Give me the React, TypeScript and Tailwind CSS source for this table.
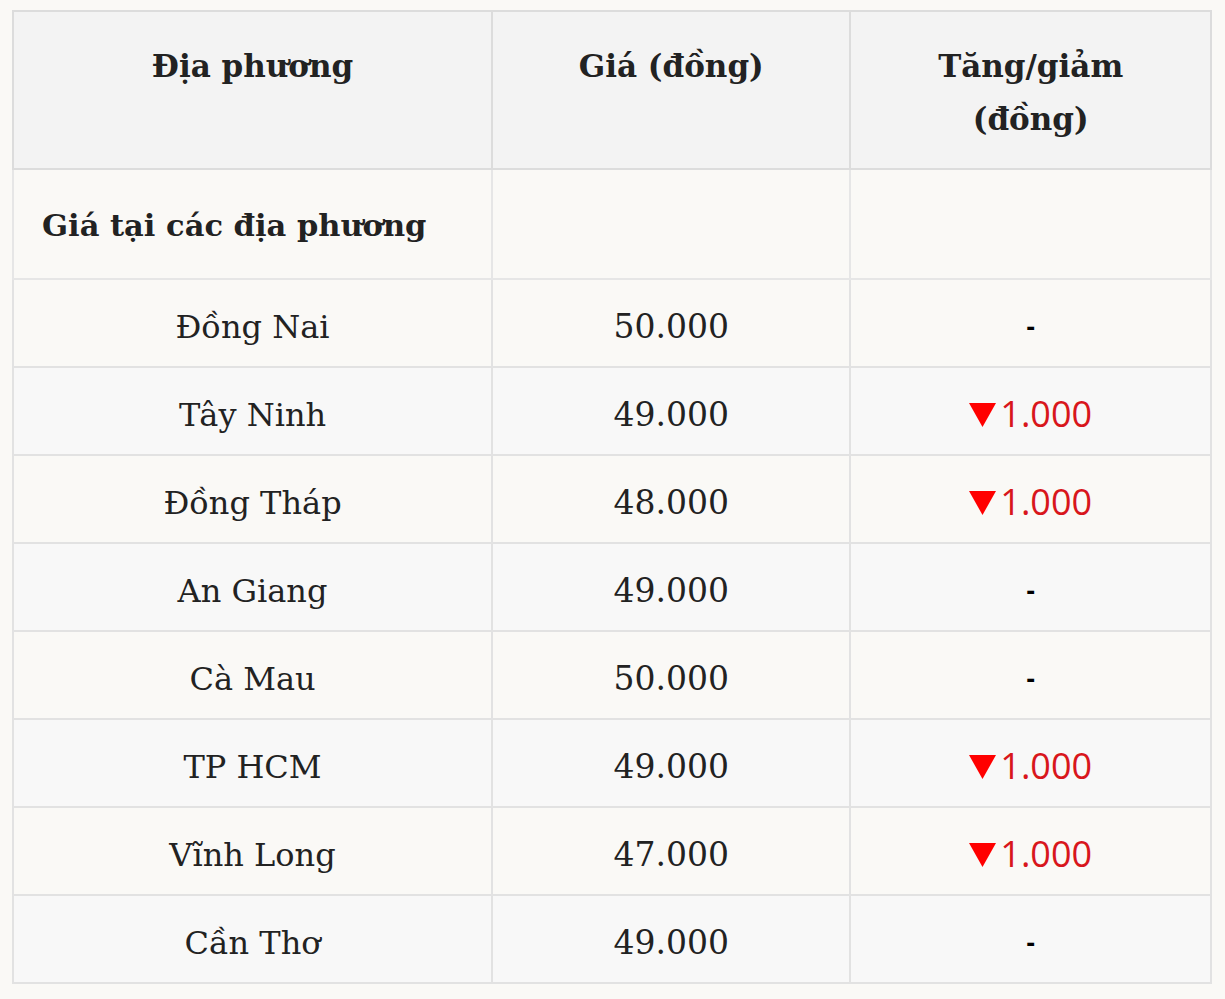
const rows: { name: string; price: string; change: string | null }[] = [
  { name: 'Đồng Nai', price: '50.000', change: null },
  { name: 'Tây Ninh', price: '49.000', change: '1.000' },
  { name: 'Đồng Tháp', price: '48.000', change: '1.000' },
  { name: 'An Giang', price: '49.000', change: null },
  { name: 'Cà Mau', price: '50.000', change: null },
  { name: 'TP HCM', price: '49.000', change: '1.000' },
  { name: 'Vĩnh Long', price: '47.000', change: '1.000' },
  { name: 'Cần Thơ', price: '49.000', change: null },
]

function Change({ value }: { value: string | null }) {
  if (!value) return <span className="font-['Open_Sans',sans-serif] font-bold text-[26px] text-black">-</span>
  return (
    <span className="inline-flex items-center gap-[4px] font-['Open_Sans',sans-serif] text-[36px] leading-none text-[#d8161c]">
      <svg width="27" height="24" viewBox="0 0 27 24" className="mt-[2px]">
        <path d="M0 0 H27 L13.5 24 Z" fill="#ff0000" />
      </svg>
      {value}
    </span>
  )
}

export default function App() {
  return (
    <div className="min-h-screen bg-[#faf9f6] pt-[10px] pl-[12px] font-['DejaVu_Serif',serif] text-[#222]">
      <table className="w-[1200px] border-collapse border-2 border-[#dcdcdc]">
        <colgroup>
          <col className="w-[480px]" />
          <col className="w-[359px]" />
          <col className="w-[361px]" />
        </colgroup>
        <thead>
          <tr className="h-[158px] bg-[#f3f3f3]">
            <th className="border-2 border-[#dcdcdc] px-6 pt-[28px] pb-[20px] align-top text-[31px] font-bold leading-[53px]">
              Địa phương
            </th>
            <th className="border-2 border-[#dcdcdc] px-6 pt-[28px] pb-[20px] align-top text-[31px] font-bold leading-[53px]">
              Giá (đồng)
            </th>
            <th className="border-2 border-[#dcdcdc] px-6 pt-[28px] pb-[20px] align-top text-[31px] font-bold leading-[53px]">
              Tăng/giảm
              <br />
              (đồng)
            </th>
          </tr>
        </thead>
        <tbody>
          <tr className="h-[110px]">
            <td className="border-2 border-[#e6e6e6] pl-[28px] pt-[4px] text-left text-[30.5px] font-bold">
              Giá tại các địa phương
            </td>
            <td className="border-2 border-[#e6e6e6]" />
            <td className="border-2 border-[#e6e6e6]" />
          </tr>
          {rows.map((r, i) => (
            <tr key={r.name} className={i % 2 === 1 ? 'h-[88px] bg-[#f8f8f8]' : 'h-[88px]'}>
              <td className="border-2 border-[#e2e2e2] pt-[7px] text-center text-[32px]">{r.name}</td>
              <td className="border-2 border-[#e2e2e2] pt-[7px] text-center text-[33px]">{r.price}</td>
              <td className="border-2 border-[#e2e2e2] pt-[7px] text-center">
                <Change value={r.change} />
              </td>
            </tr>
          ))}
        </tbody>
      </table>
    </div>
  )
}
